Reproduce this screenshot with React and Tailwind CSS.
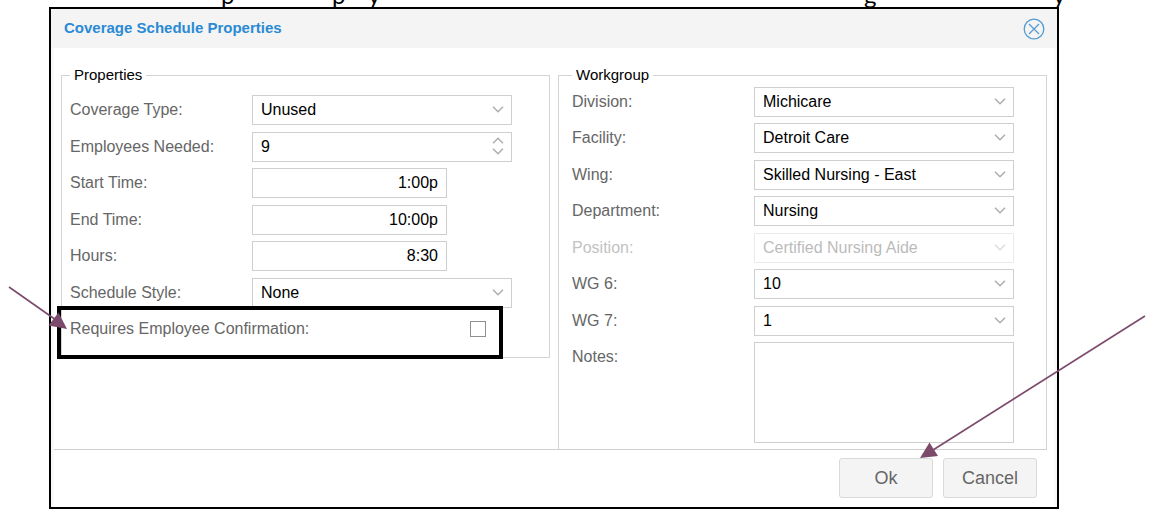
import {useId} from "react";

const workgroupFields = [
    {label: "Division:", value: "Michicare"},
    {label: "Facility:", value: "Detroit Care"},
    {label: "Wing:", value: "Skilled Nursing - East"},
    {label: "Department:", value: "Nursing"},
    {label: "Position:", value: "Certified Nursing Aide", disabled: true},
    {label: "WG 6:", value: "10"},
    {label: "WG 7:", value: "1"},
]

function Chevron({up}) {
    return (
        <svg className={up ? "w-[12px] h-[7px] rotate-180" : "w-[12px] h-[7px]"} viewBox="0 0 12 7" fill="none" stroke="#adadad" strokeWidth="1.5">
            <path d="M1 0.8 L6 5.8 L11 0.8"/>
        </svg>
    )
}

function Row({id, label, disabled, children}) {
    return (
        <div className={disabled ? "flex items-start opacity-40" : "flex items-start"}>
            <label htmlFor={id} className="w-[182px] shrink-0 leading-[30px] text-[#666]">{label}</label>
            {children}
        </div>
    )
}

function SelectRow({label, value, disabled}) {
    const id = useId()
    return (
        <Row id={id} label={label} disabled={disabled}>
            <div className="relative w-[260px]">
                <select id={id} disabled={disabled} defaultValue={value} className="block w-full h-[30px] appearance-none border border-[#cfcfcf] bg-white pl-2 pr-8 text-black opacity-100 disabled:text-[#555]">
                    <option>{value}</option>
                </select>
                <span className="pointer-events-none absolute right-2 top-[11px]"><Chevron/></span>
            </div>
        </Row>
    )
}

function SpinnerRow({label, value}) {
    const id = useId()
    return (
        <Row id={id} label={label}>
            <div className="relative w-[260px]">
                <input id={id} type="text" inputMode="numeric" defaultValue={value} className="block w-full h-[30px] border border-[#cfcfcf] bg-white pl-2 pr-8 text-black"/>
                <div className="absolute right-2 top-[5px] flex flex-col gap-1">
                    <button type="button" aria-label="Increase" className="block"><Chevron up/></button>
                    <button type="button" aria-label="Decrease" className="block"><Chevron/></button>
                </div>
            </div>
        </Row>
    )
}

function TimeRow({label, value}) {
    const id = useId()
    return (
        <Row id={id} label={label}>
            <input id={id} type="text" defaultValue={value} className="block w-[195px] h-[30px] border border-[#cfcfcf] bg-white px-2 text-right text-black"/>
        </Row>
    )
}

function ConfirmationRow() {
    return (
        <div className="relative flex items-center h-[30px]">
            <label htmlFor="confirmation" className="w-[400px] text-[#666]">Requires Employee Confirmation:</label>
            <input id="confirmation" type="checkbox" className="size-4 appearance-none border border-[#8f8f8f] bg-white"/>
            {/* highlight box and its arrow */}
            <div className="pointer-events-none absolute -left-[13px] -top-2 w-[446px] h-[53px] border-4 border-black"/>
            <svg className="pointer-events-none absolute -left-[62px] -top-[28px] w-[60px] h-[44px]" viewBox="0 0 60 44">
                <path d="M1 1 L48 34" stroke="#7b4a6b" strokeWidth="1.6"/>
                <path d="M59 43 L50.5 26.5 L40.5 39.5 Z" fill="#7b4a6b"/>
            </svg>
        </div>
    )
}

export default function App() {
    return (
        <div className="pl-[49px] pr-[90px] font-['Liberation_Sans',Arial,sans-serif] text-[16px] text-black">
            {/* tail of the line above the dialog */}
            <div aria-hidden="true" className="-mr-4 flex h-[7px] items-end overflow-hidden font-['Lato',sans-serif] text-[24px] leading-[24px]">
                <span className="ml-[172px] w-[111px] shrink-0">p</span>
                <span className="w-[36px] shrink-0">p</span>
                <span className="w-[496px] shrink-0">y</span>
                <span className="w-[189px] shrink-0">g</span>
                <span>y</span>
            </div>

            <div role="dialog" aria-labelledby="dialog-title" className="border-2 border-black bg-white">
                <header className="flex h-[39px] items-center justify-between bg-[#f4f4f4] pl-[13px] pr-3">
                    <h1 id="dialog-title" className="text-[15px] font-bold text-[#2a8ad4]">Coverage Schedule Properties</h1>
                    <button type="button" aria-label="Close">
                        <svg className="block size-[22px]" viewBox="0 0 22 22" fill="none" stroke="#569bd0" strokeWidth="1.3">
                            <circle cx="11" cy="11" r="9.8"/>
                            <path d="M6 6 L16 16 M16 6 L6 16"/>
                        </svg>
                    </button>
                </header>

                <form className="border-x-[3px] border-[#f9f9f9]" onSubmit={e => e.preventDefault()}>
                    <div className="grid grid-cols-2 items-start gap-2 px-[7px] pt-[17px]">
                        <fieldset className="min-w-0 border border-[#d4d4d4] px-2 pt-[10px] pb-[13px]">
                            <legend className="px-1 text-[15px] leading-[20px]">Properties</legend>
                            <div className="flex h-[249px] flex-col justify-between">
                                <SelectRow label="Coverage Type:" value="Unused"/>
                                <SpinnerRow label="Employees Needed:" value="9"/>
                                <TimeRow label="Start Time:" value="1:00p"/>
                                <TimeRow label="End Time:" value="10:00p"/>
                                <TimeRow label="Hours:" value="8:30"/>
                                <SelectRow label="Schedule Style:" value="None"/>
                                <ConfirmationRow/>
                            </div>
                        </fieldset>

                        <fieldset className="min-w-0 border border-b-0 border-[#d4d4d4] px-[13px] pt-[2px] pb-[6px]">
                            <legend className="px-1 text-[15px] leading-[20px]">Workgroup</legend>
                            <div className="flex h-[356px] flex-col justify-between">
                                {workgroupFields.map(field => <SelectRow key={field.label} {...field}/>)}
                                <Row id="notes" label="Notes:">
                                    <textarea id="notes" className="block w-[260px] h-[101px] resize-none border border-[#cfcfcf] bg-white px-2 py-1"/>
                                </Row>
                            </div>
                        </fieldset>
                    </div>

                    <footer className="mr-[7px] flex justify-end gap-[10px] border-t border-[#d0d0d0] pt-2 pr-[10px] pb-[9px] text-[18px] text-[#666]">
                        <div className="relative">
                            <button type="submit" className="block w-[94px] h-[40px] rounded-[3px] border border-[#d9d9d9] bg-[#f4f4f4]">Ok</button>
                            <svg className="pointer-events-none absolute bottom-full left-[80px] w-[228px] h-[144px]" viewBox="0 0 228 144">
                                <path d="M226 2 L14 136" stroke="#7b4a6b" strokeWidth="1.6"/>
                                <path d="M1 144 L10.5 128.5 L19 142 Z" fill="#7b4a6b"/>
                            </svg>
                        </div>
                        <button type="button" className="block w-[94px] h-[40px] rounded-[3px] border border-[#d9d9d9] bg-[#f4f4f4]">Cancel</button>
                    </footer>
                </form>
            </div>
        </div>
    )
}
